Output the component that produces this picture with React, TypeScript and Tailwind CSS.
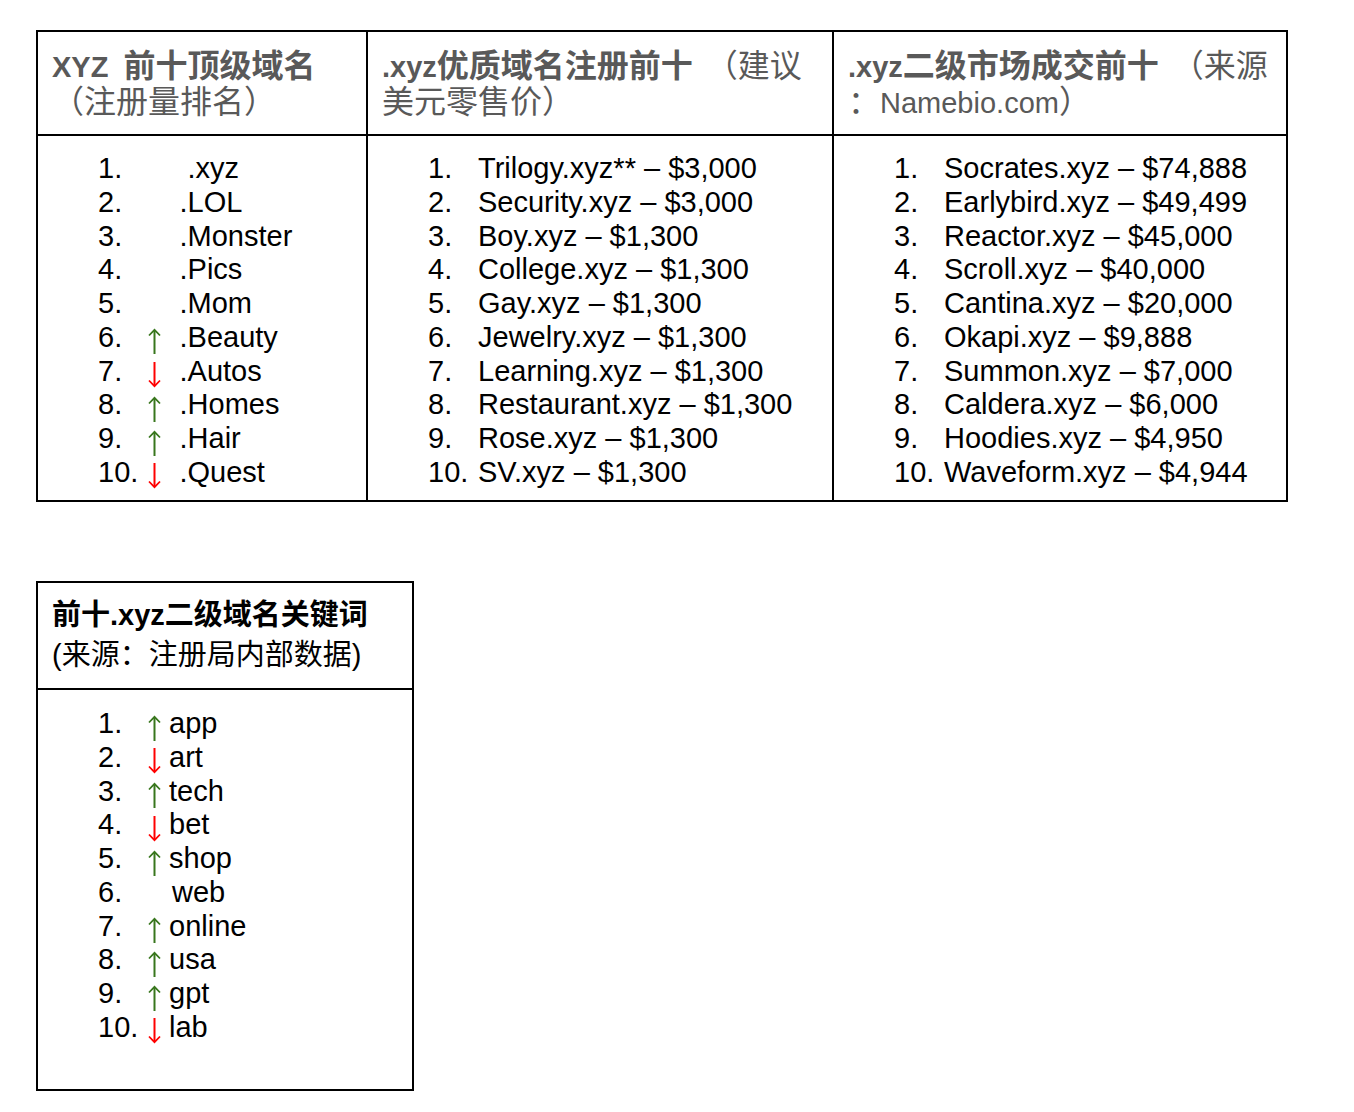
import React from "react";

const FONT = "font-['Liberation_Sans','Noto_Sans_CJK_SC',sans-serif]";

function Up() {
  return (
    <svg width="13" height="26" viewBox="0 0 13 26" className="block">
      <line x1="6.5" y1="2" x2="6.5" y2="26" stroke="#38761d" strokeWidth="2" />
      <polyline points="1,7.5 6.5,1.8 12,7.5" fill="none" stroke="#38761d" strokeWidth="1.8" />
    </svg>
  );
}

function Down() {
  return (
    <svg width="13" height="26" viewBox="0 0 13 26" className="block">
      <line x1="6.5" y1="0" x2="6.5" y2="24" stroke="#ff0000" strokeWidth="2" />
      <polyline points="1,18.5 6.5,24.2 12,18.5" fill="none" stroke="#ff0000" strokeWidth="1.8" />
    </svg>
  );
}

type Item = { n: string; a?: "up" | "down"; t: string; extra?: string };

function Row({ item, slot }: { item: Item; slot: string }) {
  return (
    <div className="flex h-[33.78px] items-start leading-[33.78px] whitespace-nowrap">
      <span className="w-[50px] shrink-0">{item.n}</span>
      <span className={`${slot} shrink-0 pt-[7.5px]`}>
        {item.a === "up" ? <Up /> : item.a === "down" ? <Down /> : null}
      </span>
      <span className={item.extra ?? ""}>{item.t}</span>
    </div>
  );
}

function Plain({ n, t }: { n: string; t: string }) {
  return (
    <div className="flex h-[33.78px] leading-[33.78px] whitespace-nowrap">
      <span className="w-[50px] shrink-0">{n}</span>
      <span>{t}</span>
    </div>
  );
}

const col1: Item[] = [
  { n: "1.", t: ".xyz", extra: "pl-[8px]" },
  { n: "2.", t: ".LOL" },
  { n: "3.", t: ".Monster" },
  { n: "4.", t: ".Pics" },
  { n: "5.", t: ".Mom" },
  { n: "6.", a: "up", t: ".Beauty" },
  { n: "7.", a: "down", t: ".Autos" },
  { n: "8.", a: "up", t: ".Homes" },
  { n: "9.", a: "up", t: ".Hair" },
  { n: "10.", a: "down", t: ".Quest" },
];

const col2 = [
  "Trilogy.xyz** – $3,000",
  "Security.xyz – $3,000",
  "Boy.xyz – $1,300",
  "College.xyz – $1,300",
  "Gay.xyz – $1,300",
  "Jewelry.xyz – $1,300",
  "Learning.xyz – $1,300",
  "Restaurant.xyz – $1,300",
  "Rose.xyz – $1,300",
  "SV.xyz – $1,300",
];

const col3 = [
  "Socrates.xyz – $74,888",
  "Earlybird.xyz – $49,499",
  "Reactor.xyz – $45,000",
  "Scroll.xyz – $40,000",
  "Cantina.xyz – $20,000",
  "Okapi.xyz – $9,888",
  "Summon.xyz – $7,000",
  "Caldera.xyz – $6,000",
  "Hoodies.xyz – $4,950",
  "Waveform.xyz – $4,944",
];

const col4: Item[] = [
  { n: "1.", a: "up", t: "app" },
  { n: "2.", a: "down", t: "art" },
  { n: "3.", a: "up", t: "tech" },
  { n: "4.", a: "down", t: "bet" },
  { n: "5.", a: "up", t: "shop" },
  { n: "6.", t: "web", extra: "pl-[3px]" },
  { n: "7.", a: "up", t: "online" },
  { n: "8.", a: "up", t: "usa" },
  { n: "9.", a: "up", t: "gpt" },
  { n: "10.", a: "down", t: "lab" },
];

export default function App() {
  const cj = "text-[32px]";
  const head =
    "h-[104px] border-b-2 border-black px-[14px] pt-[17px] leading-[35px] text-[#595959] whitespace-nowrap";
  return (
    <div className={`${FONT} min-h-[1112px] w-[1354px] bg-white text-[29px] text-black`}>
      <div className="flex flex-col gap-[79px] pl-[36px] pt-[30px]">
        {/* Table 1 */}
        <div className="grid w-[1252px] grid-cols-[330px_466px_452px] border-2 border-black">
          <div className={`${head} border-r-2`}>
            <div className="font-bold">
              XYZ<span className="inline-block w-[15px]" />
              <span className={cj}>前十顶级域名</span>
            </div>
            <div className={cj}>（注册量排名）</div>
          </div>
          <div className={`${head} border-r-2`}>
            <div>
              <span className="font-bold">
                .xyz<span className={cj}>优质域名注册前十</span>
              </span>
              <span className="inline-block w-[13px]" />
              <span className={cj}>（建议</span>
            </div>
            <div className={cj}>美元零售价）</div>
          </div>
          <div className={head}>
            <div>
              <span className="font-bold">
                .xyz<span className={cj}>二级市场成交前十</span>
              </span>
              <span className="inline-block w-[13px]" />
              <span className={cj}>（来源</span>
            </div>
            <div>
              <span className={cj}>：</span>Namebio.com<span className={cj}>）</span>
            </div>
          </div>

          <div className="h-[364px] border-r-2 border-black pl-[60px] pt-[16px]">
            {col1.map((it) => (
              <Row key={it.n} item={it} slot="w-[31.5px]" />
            ))}
          </div>
          <div className="h-[364px] border-r-2 border-black pl-[60px] pt-[16px]">
            {col2.map((t, i) => (
              <Plain key={i} n={`${i + 1}.`} t={t} />
            ))}
          </div>
          <div className="h-[364px] pl-[60px] pt-[16px]">
            {col3.map((t, i) => (
              <Plain key={i} n={`${i + 1}.`} t={t} />
            ))}
          </div>
        </div>

        {/* Table 2 */}
        <div className="flex w-[378px] flex-col border-2 border-black">
          <div className="h-[107px] border-b-2 border-black px-[14px] pt-[12px] leading-[40px] whitespace-nowrap">
            <div className="font-bold">前十.xyz二级域名关键词</div>
            <div>(来源：注册局内部数据)</div>
          </div>
          <div className="h-[399px] pl-[60px] pt-[17px]">
            {col4.map((it) => (
              <Row key={it.n} item={it} slot="w-[21px]" />
            ))}
          </div>
        </div>
      </div>
    </div>
  );
}
